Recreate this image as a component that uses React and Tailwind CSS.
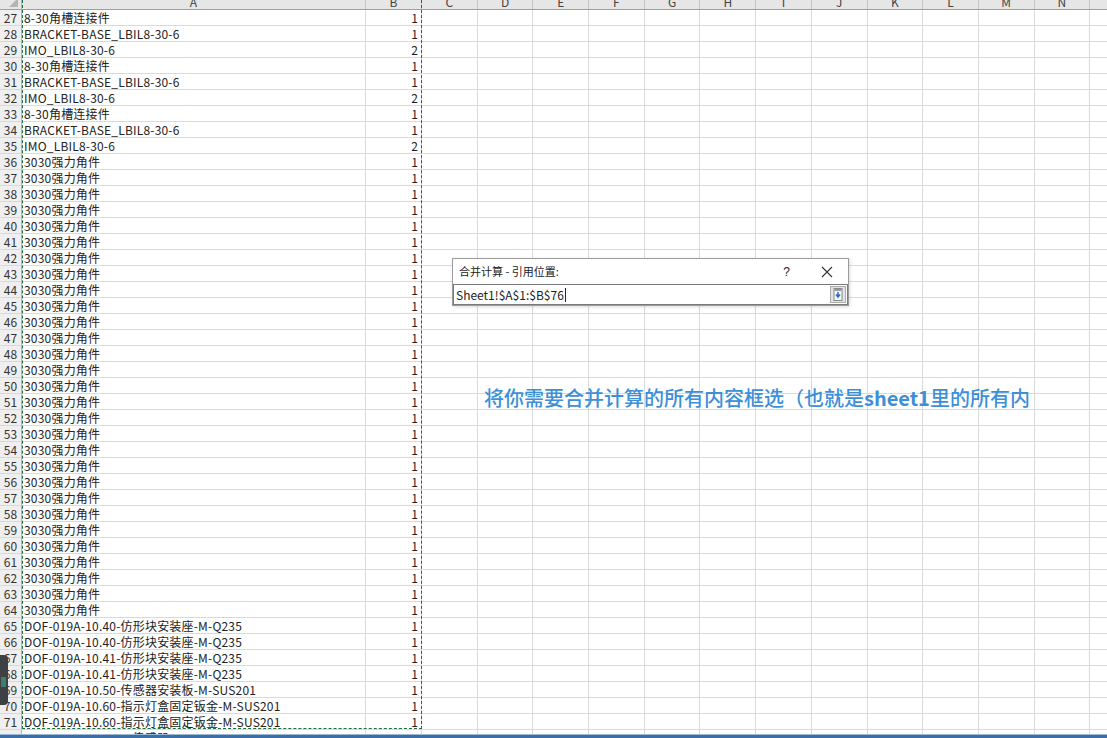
import React from "react";

const font = { fontFamily: '"Noto Sans CJK SC", "Noto Sans", sans-serif' };

const rows = [
  [27, "8-30角槽连接件", 1],
  [28, "BRACKET-BASE_LBIL8-30-6", 1],
  [29, "IMO_LBIL8-30-6", 2],
  [30, "8-30角槽连接件", 1],
  [31, "BRACKET-BASE_LBIL8-30-6", 1],
  [32, "IMO_LBIL8-30-6", 2],
  [33, "8-30角槽连接件", 1],
  [34, "BRACKET-BASE_LBIL8-30-6", 1],
  [35, "IMO_LBIL8-30-6", 2],
];
for (let n = 36; n <= 64; n++) rows.push([n, "3030强力角件", 1]);
rows.push(
  [65, "DOF-019A-10.40-仿形块安装座-M-Q235", 1],
  [66, "DOF-019A-10.40-仿形块安装座-M-Q235", 1],
  [67, "DOF-019A-10.41-仿形块安装座-M-Q235", 1],
  [68, "DOF-019A-10.41-仿形块安装座-M-Q235", 1],
  [69, "DOF-019A-10.50-传感器安装板-M-SUS201", 1],
  [70, "DOF-019A-10.60-指示灯盒固定钣金-M-SUS201", 1],
  [71, "DOF-019A-10.60-指示灯盒固定钣金-M-SUS201", 1],
  [72, "SICK_GTB6-P1211-传感器-5", 1]
);

const cols = ["C", "D", "E", "F", "G", "H", "I", "J", "K", "L", "M", "N", ""];

const Row = ({ num, name, qty }) => (
  <div className="flex h-[16px] shrink-0 text-[12px] leading-[15px] text-[#222]">
    <div className="w-[22px] shrink-0 bg-[#efefef] border-r border-r-[#b5b5b5] border-b border-b-[#d8d8d8] text-center text-[#333]">
      {num}
    </div>
    <div className="w-[344px] shrink-0 border-r border-b border-[#dadada] pl-[2px] whitespace-nowrap overflow-hidden tracking-[0.2px]">
      {name}
    </div>
    <div className="w-[56px] shrink-0 border-r border-b border-[#dadada] text-right pr-[3px]">
      {qty}
    </div>
    {cols.map((c, i) => (
      <div key={i} className="w-[55.7px] shrink-0 border-r border-b border-[#dadada]" />
    ))}
  </div>
);

export default function App() {
  return (
    <div className="relative w-[1107px] h-[738px] overflow-hidden bg-white" style={font}>
      {/* column headers, cut off at the top */}
      <div className="flex h-[10px] bg-[#e6e6e6] border-b border-[#9f9f9f] text-[12px] text-[#444] overflow-hidden">
        <div className="w-[22px] shrink-0 border-r border-[#b5b5b5] relative">
          <div className="absolute right-[3px] bottom-[2px] w-0 h-0 border-l-[9px] border-l-transparent border-b-[9px] border-b-[#b4b4b4]" />
        </div>
        <div className="w-[344px] shrink-0 border-r border-[#c5c5c5] text-center leading-[10px] -mt-[3px]">A</div>
        <div className="w-[56px] shrink-0 border-r border-[#c5c5c5] text-center leading-[10px] -mt-[3px]">B</div>
        {cols.map((c, i) => (
          <div key={i} className="w-[55.7px] shrink-0 border-r border-[#c5c5c5] text-center leading-[10px] -mt-[3px]">
            {c}
          </div>
        ))}
      </div>

      <div className="flex flex-col">
        {rows.map(([n, name, q]) => (
          <Row key={n} num={n} name={name} qty={q} />
        ))}
      </div>

      {/* taskbar edge */}
      <div className="absolute left-0 right-0 bottom-0 h-[4px] bg-[#3b6ea8] border-t border-[#9cb8d8]" />

      {/* copy marquee around A:B */}
      <div className="absolute left-[22px] top-[-10px] w-[400px] h-[739px] border border-dashed border-[#1f6b45] pointer-events-none" />

      {/* side handle */}
      <div className="absolute left-0 top-[655px] w-[8px] h-[50px] bg-[#3d4143] rounded-r-sm">
        <div className="mt-[22px] ml-[1px] w-[5px] h-[10px] bg-[#3f7f6a]" />
      </div>

      {/* dialog */}
      <div className="absolute left-[452px] top-[258px] w-[397px] h-[48px] bg-white border border-[#9c9c9c] shadow-[1px_1px_3px_rgba(0,0,0,0.15)]">
        <div className="flex items-center h-[25px] text-[11px] text-[#222]">
          <span className="pl-[6px]">合并计算 - 引用位置:</span>
          <span className="ml-auto mr-[31px] text-[12px]" style={{ fontFamily: '"Liberation Sans", sans-serif' }}>?</span>
          <svg width="12" height="12" viewBox="0 0 12 12" className="mr-[15px]">
            <path d="M1 1 L11 11 M11 1 L1 11" stroke="#333" strokeWidth="1.1" />
          </svg>
        </div>
        <div className="flex items-center h-[21px] border border-[#7a7a7a]">
          <span className="pl-[2px] text-[12px] text-[#222]">Sheet1!$A$1:$B$76</span>
          <span className="w-px h-[14px] bg-[#222] ml-[1px]" />
          <div className="ml-auto mr-[1px] w-[16px] h-[17px] bg-[#e3e3e3] border border-[#adadad] flex items-center justify-center">
            <svg width="10" height="13" viewBox="0 0 10 13">
              <rect x="1" y="0.5" width="8" height="12" fill="#f8f8f8" stroke="#8a8a8a" />
              <rect x="1.5" y="1" width="7" height="2" fill="#9a9a9a" />
              <path d="M5 4 V8 M3 6.5 L5 9 L7 6.5" stroke="#2a6fc9" strokeWidth="1.6" fill="none" />
            </svg>
          </div>
        </div>
      </div>

      {/* annotation */}
      <div className="absolute left-[484px] top-[383px] text-[20px] font-medium text-[#3d8fd8] whitespace-nowrap">
        将你需要合并计算的所有内容框选（也就是<span className="font-bold">sheet1</span>里的所有内
      </div>
    </div>
  );
}
